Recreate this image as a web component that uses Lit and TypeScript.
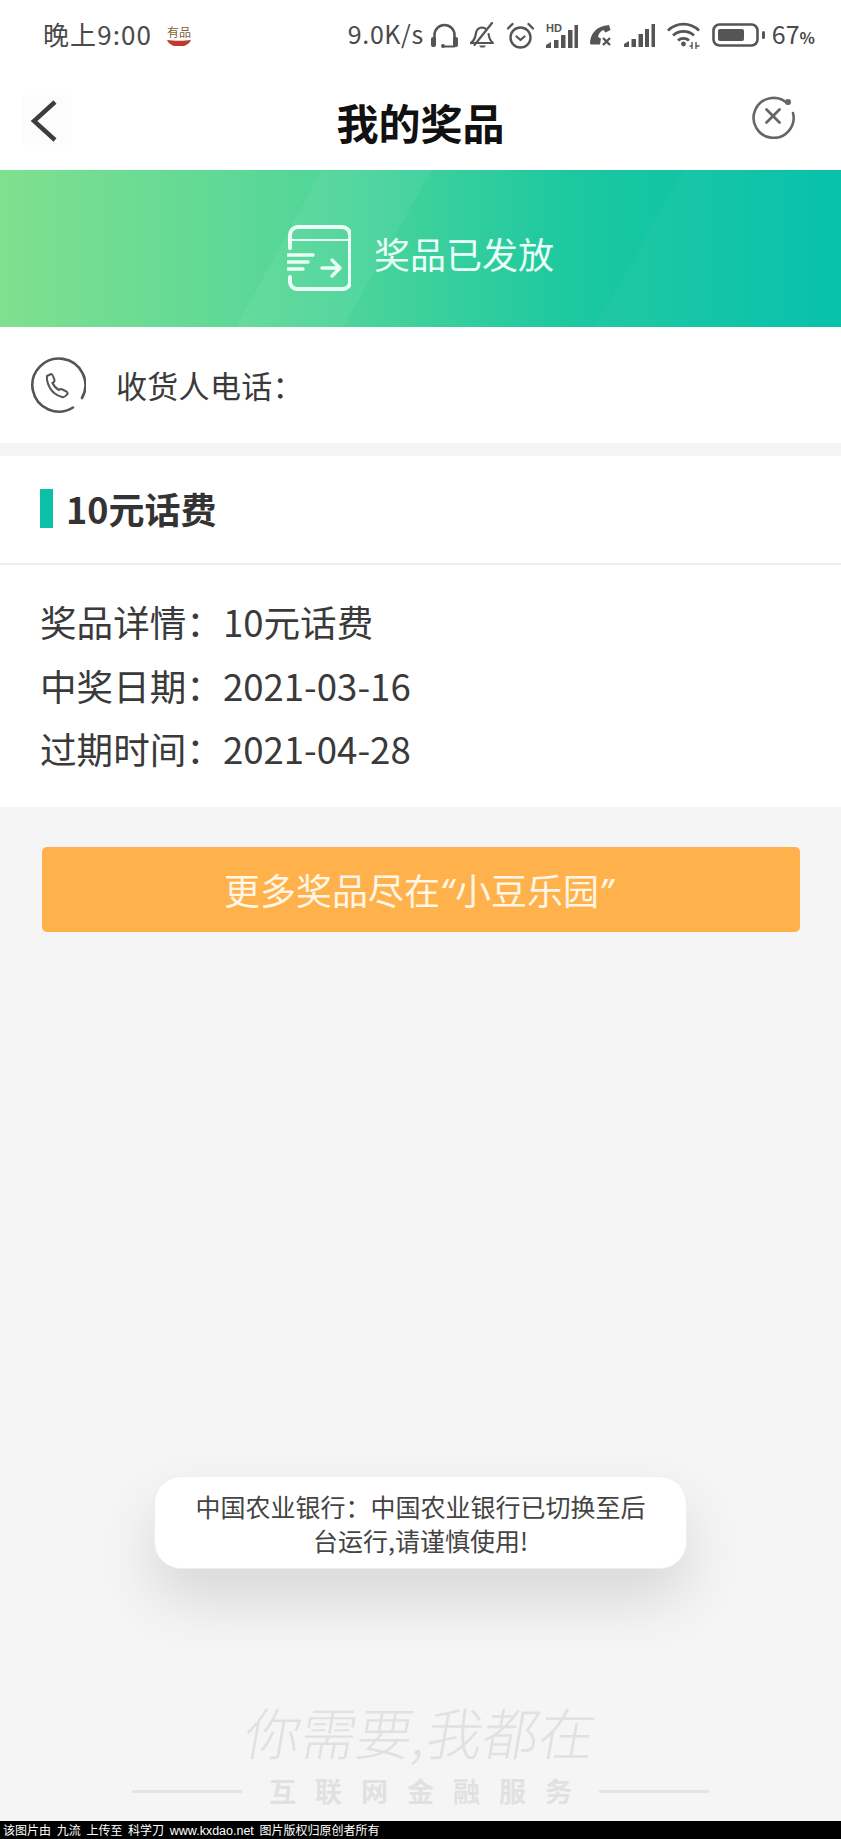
import { LitElement, html, css, svg } from 'lit';
import { customElement } from 'lit/decorators.js';

const icons = {
  headset: html`<svg class="ic" width="27" height="26" viewBox="0 0 27 26">
    <path d="M3.5 17V13a10 10 0 0 1 20 0v4" fill="none" stroke="#555" stroke-width="2.6"/>
    <rect x="0" y="15" width="5" height="10" rx="2" fill="#555"/>
    <rect x="22" y="15" width="5" height="10" rx="2" fill="#555"/>
    <path d="M12 24.5h12" stroke="#555" stroke-width="2"/>
    <circle cx="12" cy="24" r="2" fill="#555"/>
  </svg>`,
  bellOff: html`<svg class="ic" width="25" height="26" viewBox="0 0 25 26">
    <g fill="none" stroke="#555" stroke-width="2.2" stroke-linecap="round" stroke-linejoin="round">
      <path d="M1 21h22c-3-2.500-4-5-4.400-9"/>
      <path d="M1 21c4-3 4.500-6 5-10 .5-3.500 2.500-5 5.500-5.500 1.500 0 3 .5 4 1.200"/>
      <path d="M4.500 23 22 1"/>
    </g>
    <path d="M9 23.500h7l-1.500 2h-4z" fill="#555"/>
  </svg>`,
  alarm: html`<svg class="ic" width="27" height="27" viewBox="0 0 27 27">
    <g fill="none" stroke="#555" stroke-linecap="round" stroke-linejoin="round">
      <circle cx="13.500" cy="15.500" r="10" stroke-width="2.400"/>
      <path d="M1 6.500 5.500 2M26 6.500 21.500 2" stroke-width="2.400"/>
      <path d="M9.500 14.500l4 3.500 4-3.500" stroke-width="2.200"/>
    </g>
  </svg>`,
  hdSignal: html`<svg class="ic" width="32" height="25" viewBox="0 0 32 25">
    <text x="0" y="9" class="hd">HD</text>
    <path d="M0 22l5-3v6H0zM8 17h4.500v8H8zM15 12h4.500v13H15zM22 7h4.500v18H22zM28.500 2H32v23h-3.500z" fill="#555"/>
  </svg>`,
  callOff: html`<svg class="ic" width="22" height="22" viewBox="0 0 22 22">
    <path d="M0 20c0-10 6-18 19-19l1.500 5-5 2.500-2-2.500c-3 1-5 4-5.500 7l3 1.500-1 6H1.500z" fill="#555"/>
    <path d="M13 14l7 7M20 14l-7 7" stroke="#555" stroke-width="2.400"/>
  </svg>`,
  signal: html`<svg class="ic" width="31" height="23" viewBox="0 0 31 23">
    <path d="M0 20l5-3v6H0zM7.500 15H12v8H7.500zM14.500 10H19v13h-4.500zM21 5h4v18h-4zM27.500 0H31v23h-3.500z" fill="#555"/>
  </svg>`,
  wifi: html`<svg class="ic" width="33" height="27" viewBox="0 0 33 27">
    <g fill="none" stroke="#555" stroke-width="2.800">
      <path d="M1 8.500c9-8.500 22-8.500 31 0"/>
      <path d="M6 13.500c6-5.500 15-5.500 21 0"/>
      <path d="M11 18.500c3-2.800 8-2.800 11 0"/>
    </g>
    <circle cx="16.500" cy="22" r="2.400" fill="#555"/>
    <path d="M25 20v7M29 20v7M22.500 24h2M29.500 24h3" stroke="#555" stroke-width="1.400"/>
  </svg>`,
  battery: html`<svg class="ic" width="53" height="24" viewBox="0 0 53 24">
    <rect x="1.500" y="1.500" width="44" height="21" rx="6" fill="none" stroke="#555" stroke-width="2.600"/>
    <rect x="6" y="6" width="26" height="12" rx="2" fill="#555"/>
    <rect x="50" y="8" width="3" height="8" rx="1.500" fill="#555"/>
  </svg>`,
  close: html`<svg width="44" height="44" viewBox="0 0 44 44">
    <path d="M35.500 8.500A20 20 0 1 0 41 18" fill="none" stroke="#666" stroke-width="2.600" stroke-linecap="round"/>
    <circle cx="36" cy="7" r="3" fill="#666"/>
    <path d="M14.500 14.500l13 13M27.500 14.500l-13 13" stroke="#666" stroke-width="2.800" stroke-linecap="round"/>
  </svg>`,
  back: html`<svg width="50" height="50" viewBox="0 0 50 50">
    <path d="M33 7 12 26l21 19" fill="none" stroke="#3d3d3d" stroke-width="4.400"/>
  </svg>`,
  box: html`<svg class="box-ic" width="64" height="66" viewBox="0 0 64 66">
    <g fill="none" stroke="#eafff6" stroke-linecap="round" stroke-linejoin="round">
      <path d="M3 23V10a8 8 0 0 1 8-8h44a8 8 0 0 1 8 8v47a7 7 0 0 1-7 7H10a7 7 0 0 1-7-7v-5" stroke-width="4"/>
      <path d="M3 15h60" stroke-width="2"/>
      <path d="M1 30h25M1 37h20M1 44h15" stroke-width="3.400"/>
      <path d="M35 43h18M45 35l8 8-8 8" stroke-width="3.400"/>
    </g>
  </svg>`,
  phone: html`<svg width="56" height="58" viewBox="0 0 56 58">
    <path d="M52 41A26.500 26.500 0 1 0 43 50.500" fill="none" stroke="#555" stroke-width="2.600" stroke-linecap="round"/>
    <path d="M17 19l4-2c1 0 1.600.7 2 2l1.500 4c0 2-.8 2.600-2 3 1.600 3.500 3.600 5.500 6.500 7 1.200-1.200 2.200-1.200 3.500-.5l4 2c1.600 1.200 1.300 2.300.5 3-1.800 2.400-3.200 3-5 2.500-5.500-1.500-9.500-4.500-12-9-2.500-4.300-3.500-8-3-12z" fill="none" stroke="#555" stroke-width="2"/>
  </svg>`,
};

@customElement('app-root')
export class AppRoot extends LitElement {
  static styles = css`
    :host {
      display: block;
      font-family: 'Noto Sans CJK SC', 'Noto Sans', sans-serif;
    }
    .page {
      position: relative;
      width: 841px;
      height: 1839px;
      display: flex;
      flex-direction: column;
      background: #f5f5f5;
      overflow: hidden;
    }
    .status {
      height: 70px;
      padding: 0 26px 0 43px;
      background: #fff;
      color: #4a4a4a;
      display: flex;
      align-items: center;
      justify-content: space-between;
    }
    .status-left, .status-right {
      display: flex;
      align-items: center;
    }
    .time {
      font-size: 26px;
      line-height: 1;
      letter-spacing: 1.100px;
      margin-bottom: 2px;
    }
    .youpin {
      margin-left: 14px;
      width: 26px;
      display: flex;
      flex-direction: column;
      align-items: center;
      font-size: 12px;
      line-height: 14px;
      color: #7d6237;
      white-space: nowrap;
    }
    .status-right {
      gap: 12px;
    }
    .speed {
      font-size: 25px;
      line-height: 1;
      margin: 0 -5px 3px 0;
      letter-spacing: 0.6px;
    }
    .ic {
      display: block;
      flex: none;
    }
    .hd {
      font: 700 11px 'Liberation Sans', sans-serif;
      fill: #555;
    }
    .batt-text {
      margin: 0 0 3px -5px;
      font-size: 25px;
      line-height: 1;
    }
    .batt-text small {
      font-size: 16px;
      font-weight: 700;
    }
    .nav {
      height: 100px;
      background: #fff;
      display: grid;
      grid-template-columns: 1fr auto 1fr;
      align-items: center;
    }
    .nav h1 {
      margin: 4px 0 0;
      font-size: 42px;
      line-height: 1;
      font-weight: 700;
      color: #111;
    }
    .back {
      margin-left: 22px;
      width: 50px;
      height: 50px;
      background: #fcfcfc;
    }
    .close {
      justify-self: end;
      margin: 0 45px 6px 0;
      height: 44px;
    }
    .banner {
      position: relative;
      height: 157px;
      background: linear-gradient(90deg, #80e08f 0%, #4fd59a 40%, #1cc8a0 68%, #00c0aa 100%);
      display: flex;
      align-items: center;
      justify-content: center;
      gap: 23px;
      color: #eafff6;
      font-size: 36px;
    }
    .stripes {
      position: absolute;
      inset: 0;
    }
    .box-ic, .banner span {
      position: relative;
    }
    .box-ic {
      margin: 18px 0 0 0;
    }
    .banner span {
      margin-top: 9px;
    }
    .phone-row {
      height: 116px;
      padding-left: 30px;
      background: #fff;
      display: flex;
      align-items: center;
      gap: 30px;
      font-size: 31px;
      letter-spacing: 0.3px;
      color: #3a3a3a;
    }
    .phone-row svg {
      margin-top: 2px;
    }
    .phone-row span {
      margin-bottom: 2px;
    }
    .card {
      margin-top: 13px;
      background: #fff;
    }
    .card-title {
      height: 107px;
      padding-left: 40px;
      border-bottom: 2px solid #eeeeee;
      display: flex;
      align-items: center;
      gap: 13px;
      font-size: 36px;
      font-weight: 700;
      color: #333;
    }
    .card-title i {
      width: 13px;
      height: 39px;
      background: #0cc0a8;
      margin-bottom: 2px;
    }
    .card-title span {
      margin-bottom: 4px;
    }
    .details {
      padding: 25px 40px 26px;
      font-size: 36.600px;
      line-height: 63.500px;
      color: #3a3a3a;
    }
    .more {
      margin: 40px 41px 0 42px;
      height: 85px;
      padding-right: 4px;
      border-radius: 5px;
      background: #ffb14c;
      color: #fff6e6;
      font-size: 36px;
      display: flex;
      align-items: center;
      justify-content: center;
    }
    .quote {
      font-family: 'Noto Sans', sans-serif;
      font-style: italic;
      letter-spacing: 2px;
    }
    .toast {
      position: absolute;
      left: 154px;
      top: 1476px;
      width: 533px;
      height: 93px;
      box-sizing: border-box;
      border: 1px solid #eeeeee;
      border-radius: 27px;
      background: #fff;
      box-shadow: 0 30px 60px rgba(0, 0, 0, 0.12);
      display: flex;
      align-items: center;
      justify-content: center;
      text-align: center;
      padding: 0 30px;
      font-size: 25px;
      line-height: 34px;
      color: #444;
    }
    .watermark {
      margin-top: auto;
      padding-bottom: 10px;
      display: flex;
      flex-direction: column;
      align-items: center;
      color: #e1e1e1;
    }
    .slogan {
      font-size: 56px;
      line-height: 80px;
      font-weight: 300;
      transform: skewX(-10deg);
    }
    .service {
      display: flex;
      align-items: center;
      gap: 27px;
      font-size: 27px;
      line-height: 40px;
      font-weight: 700;
      letter-spacing: 19px;
    }
    .service i {
      width: 110px;
      height: 3px;
      background: #e4e4e4;
    }
    .service span {
      margin-right: -19px;
    }
    .footer {
      height: 18px;
      padding-left: 3px;
      background: #000;
      color: #fff;
      font-size: 12px;
      line-height: 18px;
      word-spacing: 3px;
      white-space: nowrap;
    }
    .latin {
      font-family: 'Liberation Sans', sans-serif;
      font-size: 12.500px;
    }
  `;

  render() {
    return html`
      <div class="page">
        <div class="status">
          <div class="status-left">
            <span class="time">晚上9:00</span>
            <div class="youpin">
              <span>有品</span>
              <svg width="24" height="7" viewBox="0 0 24 7">
                ${svg`<path d="M0 1c6 1 18 1 24 0-1 3-4 5-7 6H7C4 6 1 4 0 1z" fill="#c0392b"/>`}
              </svg>
            </div>
          </div>
          <div class="status-right">
            <span class="speed">9.0K/s</span>
            ${icons.headset}${icons.bellOff}${icons.alarm}${icons.hdSignal}
            ${icons.callOff}${icons.signal}${icons.wifi}${icons.battery}
            <span class="batt-text">67<small>%</small></span>
          </div>
        </div>

        <div class="nav">
          <div class="back">${icons.back}</div>
          <h1>我的奖品</h1>
          <div class="close">${icons.close}</div>
        </div>

        <div class="banner">
          <svg class="stripes" width="841" height="157" viewBox="0 0 841 157">
            <path d="M236 157 322 0h110l-89 157z" fill="#fff" opacity="0.05"/>
            <path d="M595 157 684 0h157v157z" fill="#fff" opacity="0.03"/>
          </svg>
          ${icons.box}
          <span>奖品已发放</span>
        </div>

        <div class="phone-row">${icons.phone}<span>收货人电话：</span></div>

        <div class="card">
          <div class="card-title"><i></i><span>10元话费</span></div>
          <div class="details">
            <div>奖品详情：10元话费</div>
            <div>中奖日期：2021-03-16</div>
            <div>过期时间：2021-04-28</div>
          </div>
        </div>

        <div class="more">
          <span>更多奖品尽在<span class="quote">“</span>小豆乐园<span class="quote">”</span></span>
        </div>

        <div class="watermark">
          <div class="slogan">你需要,我都在</div>
          <div class="service"><i></i><span>互联网金融服务</span><i></i></div>
        </div>

        <div class="footer">该图片由 九流 上传至 科学刀 <span class="latin">www.kxdao.net</span> 图片版权归原创者所有</div>

        <div class="toast">中国农业银行：中国农业银行已切换至后台运行,请谨慎使用!</div>
      </div>
    `;
  }
}
